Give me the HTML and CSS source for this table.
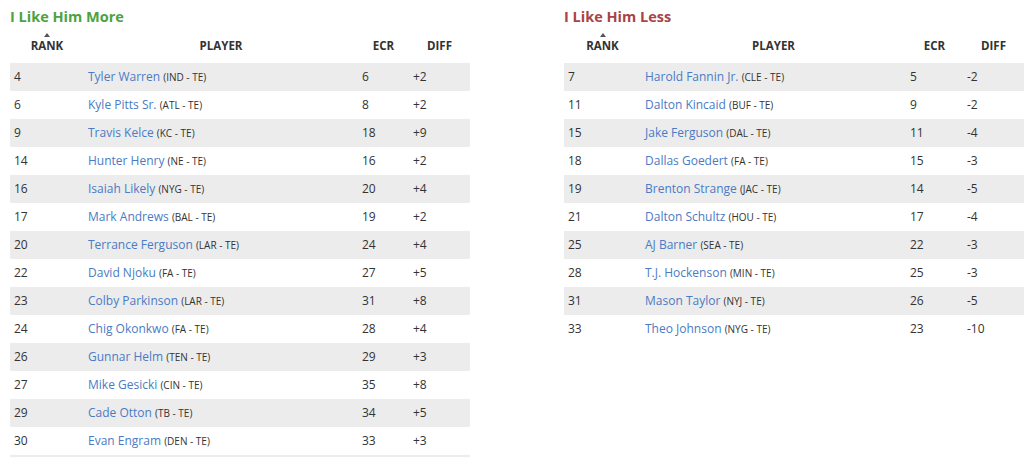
FILE: index.html
```html
<!DOCTYPE html>
<html>
<head>
<meta charset="utf-8">
<link rel="stylesheet" href="styles.css">
</head>
<body>
<div class="page">
  <section class="panel">
    <h2 class="title more">I Like Him More</h2>
    <table class="rank-table left">
      <colgroup><col class="c-rank"><col class="c-player"><col class="c-ecr"><col class="c-diff"></colgroup>
      <thead>
        <tr><th class="sorted"><span class="arrow"></span>RANK</th><th>PLAYER</th><th>ECR</th><th>DIFF</th></tr>
      </thead>
      <tbody>
        <tr><td>4</td><td><a>Tyler Warren</a> <small>(IND - TE)</small></td><td>6</td><td>+2</td></tr>
        <tr><td>6</td><td><a>Kyle Pitts Sr.</a> <small>(ATL - TE)</small></td><td>8</td><td>+2</td></tr>
        <tr><td>9</td><td><a>Travis Kelce</a> <small>(KC - TE)</small></td><td>18</td><td>+9</td></tr>
        <tr><td>14</td><td><a>Hunter Henry</a> <small>(NE - TE)</small></td><td>16</td><td>+2</td></tr>
        <tr><td>16</td><td><a>Isaiah Likely</a> <small>(NYG - TE)</small></td><td>20</td><td>+4</td></tr>
        <tr><td>17</td><td><a>Mark Andrews</a> <small>(BAL - TE)</small></td><td>19</td><td>+2</td></tr>
        <tr><td>20</td><td><a>Terrance Ferguson</a> <small>(LAR - TE)</small></td><td>24</td><td>+4</td></tr>
        <tr><td>22</td><td><a>David Njoku</a> <small>(FA - TE)</small></td><td>27</td><td>+5</td></tr>
        <tr><td>23</td><td><a>Colby Parkinson</a> <small>(LAR - TE)</small></td><td>31</td><td>+8</td></tr>
        <tr><td>24</td><td><a>Chig Okonkwo</a> <small>(FA - TE)</small></td><td>28</td><td>+4</td></tr>
        <tr><td>26</td><td><a>Gunnar Helm</a> <small>(TEN - TE)</small></td><td>29</td><td>+3</td></tr>
        <tr><td>27</td><td><a>Mike Gesicki</a> <small>(CIN - TE)</small></td><td>35</td><td>+8</td></tr>
        <tr><td>29</td><td><a>Cade Otton</a> <small>(TB - TE)</small></td><td>34</td><td>+5</td></tr>
        <tr><td>30</td><td><a>Evan Engram</a> <small>(DEN - TE)</small></td><td>33</td><td>+3</td></tr>
        <tr class="partial"><td></td><td></td><td></td><td></td></tr>
      </tbody>
    </table>
  </section>
  <section class="panel">
    <h2 class="title less">I Like Him Less</h2>
    <table class="rank-table right">
      <colgroup><col class="c-rank"><col class="c-player"><col class="c-ecr"><col class="c-diff"></colgroup>
      <thead>
        <tr><th class="sorted"><span class="arrow"></span>RANK</th><th>PLAYER</th><th>ECR</th><th>DIFF</th></tr>
      </thead>
      <tbody>
        <tr><td>7</td><td><a>Harold Fannin Jr.</a> <small>(CLE - TE)</small></td><td>5</td><td>-2</td></tr>
        <tr><td>11</td><td><a>Dalton Kincaid</a> <small>(BUF - TE)</small></td><td>9</td><td>-2</td></tr>
        <tr><td>15</td><td><a>Jake Ferguson</a> <small>(DAL - TE)</small></td><td>11</td><td>-4</td></tr>
        <tr><td>18</td><td><a>Dallas Goedert</a> <small>(FA - TE)</small></td><td>15</td><td>-3</td></tr>
        <tr><td>19</td><td><a>Brenton Strange</a> <small>(JAC - TE)</small></td><td>14</td><td>-5</td></tr>
        <tr><td>21</td><td><a>Dalton Schultz</a> <small>(HOU - TE)</small></td><td>17</td><td>-4</td></tr>
        <tr><td>25</td><td><a>AJ Barner</a> <small>(SEA - TE)</small></td><td>22</td><td>-3</td></tr>
        <tr><td>28</td><td><a>T.J. Hockenson</a> <small>(MIN - TE)</small></td><td>25</td><td>-3</td></tr>
        <tr><td>31</td><td><a>Mason Taylor</a> <small>(NYJ - TE)</small></td><td>26</td><td>-5</td></tr>
        <tr><td>33</td><td><a>Theo Johnson</a> <small>(NYG - TE)</small></td><td>23</td><td>-10</td></tr>
      </tbody>
    </table>
  </section>
</div>
</body>
</html>
```
FILE: styles.css
```css
html, body {
  margin: 0;
  padding: 0;
  background: #fff;
}
body {
  font-family: "Open Sans", "Noto Sans", sans-serif;
  color: #333;
}
.page {
  display: flex;
  gap: 94px;
  padding-left: 10px;
}
.panel {
  width: 460px;
  flex: none;
}
.title {
  margin: 7px 0 0;
  font-size: 14.5px;
  line-height: 20px;
  font-weight: 700;
}
.title.more { color: #4ca33e; }
.title.less { color: #a84444; }

.rank-table {
  width: 460px;
  border-collapse: collapse;
  table-layout: fixed;
}
.left .c-rank { width: 74px; }
.left .c-player { width: 274px; }
.left .c-ecr { width: 51px; }
.left .c-diff { width: 61px; }
.right .c-rank { width: 77px; }
.right .c-player { width: 265px; }
.right .c-ecr { width: 57px; }
.right .c-diff { width: 61px; }

.rank-table th {
  padding: 11px 4px 9px;
  font-size: 11.5px;
  font-weight: 700;
  text-align: center;
  vertical-align: top;
  line-height: 16px;
  color: #333;
}
.rank-table th.sorted {
  position: relative;
}
.arrow {
  position: absolute;
  left: 50%;
  top: 6px;
  margin-left: -3px;
  width: 0;
  height: 0;
  border-left: 3px solid transparent;
  border-right: 3px solid transparent;
  border-bottom: 4px solid #555;
}
.rank-table td {
  height: 27px;
  padding: 0 4px 1px;
  box-sizing: border-box;
  font-size: 12px;
  line-height: 17px;
  vertical-align: middle;
  white-space: nowrap;
}
.rank-table tbody tr {
  height: 28px;
}
.rank-table tbody tr:nth-child(odd) td {
  background: #ececec;
}
.rank-table a {
  color: #4a7bc4;
  text-decoration: none;
}
.rank-table small {
  font-size: 10px;
  color: #333;
}
```
